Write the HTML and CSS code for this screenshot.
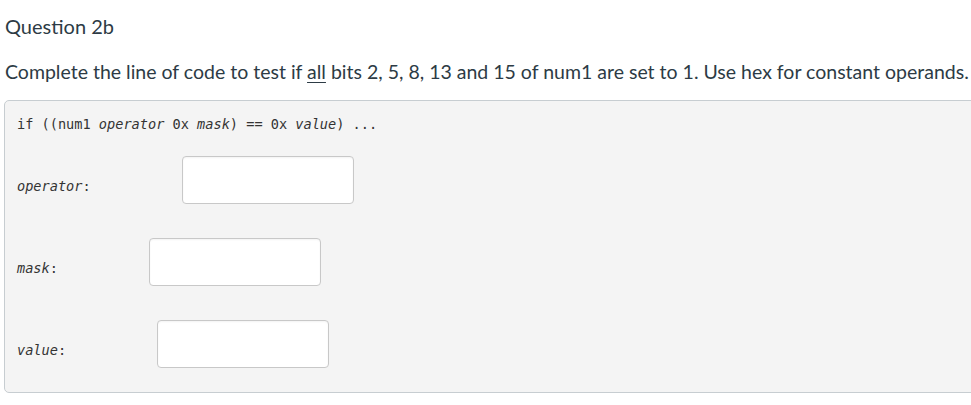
FILE: index.html
```html
<!DOCTYPE html>
<html>
<head>
<meta charset="utf-8">
<link rel="stylesheet" href="styles.css">
</head>
<body>
<div class="page">
  <h2 class="qtitle">Question 2b</h2>
  <p class="qtext">Complete the line of code to test if <u>all</u> bits 2, 5, 8, 13 and 15 of num1 are set to 1. Use hex for constant operands.</p>
  <div class="codebox">
    <div class="code">if ((num1 <i>operator</i> 0x <i>mask</i>) == 0x <i>value</i>) ...</div>
    <div class="row"><span class="label"><i>operator</i>:</span><input class="field" type="text"></div>
    <div class="row"><span class="label"><i>mask</i>:</span><input class="field" type="text"></div>
    <div class="row"><span class="label"><i>value</i>:</span><input class="field" type="text"></div>
  </div>
</div>
</body>
</html>
```
FILE: styles.css
```css
html, body {
  margin: 0;
  padding: 0;
  overflow: hidden;
  background: #fff;
}
.page {
  font-family: Lato, "Noto Sans", sans-serif;
  color: #2d3b45;
  padding: 0 0 0 4px;
  width: 980px;
}
.qtitle {
  margin: 0;
  padding: 13px 0 0 1px;
  font-size: 20px;
  font-weight: 400;
  line-height: 26px;
}
.qtext {
  margin: 0;
  padding: 20px 0 0 1px;
  font-size: 19.5px;
  line-height: 26px;
}
.qtext u {
  text-decoration-thickness: 1px;
  text-underline-offset: 3px;
}
.codebox {
  margin-top: 15px;
  background: #f4f4f4;
  border: 1px solid #c7cdd1;
  border-radius: 5px;
  height: 293px;
  box-sizing: border-box;
  padding: 14px 0 0 12px;
  font-family: "DejaVu Sans Mono", "Liberation Mono", monospace;
  font-size: 13.6px;
  color: #333;
}
.code {
  line-height: 18px;
  white-space: pre;
}
.row {
  display: flex;
  align-items: center;
  margin-top: 6px;
  height: 82px;
}
.row + .row {
  margin-top: 0;
}
.label {
  white-space: pre;
  padding-top: 12px;
}
.field {
  margin: 0 0 0 91px;
  width: 172px;
  height: 48px;
  box-sizing: border-box;
  border: 1px solid #c8c8c8;
  border-radius: 4px;
  background: #fff;
  box-shadow: inset 0 1px 2px rgba(0,0,0,0.05);
  padding: 0;
}
```
